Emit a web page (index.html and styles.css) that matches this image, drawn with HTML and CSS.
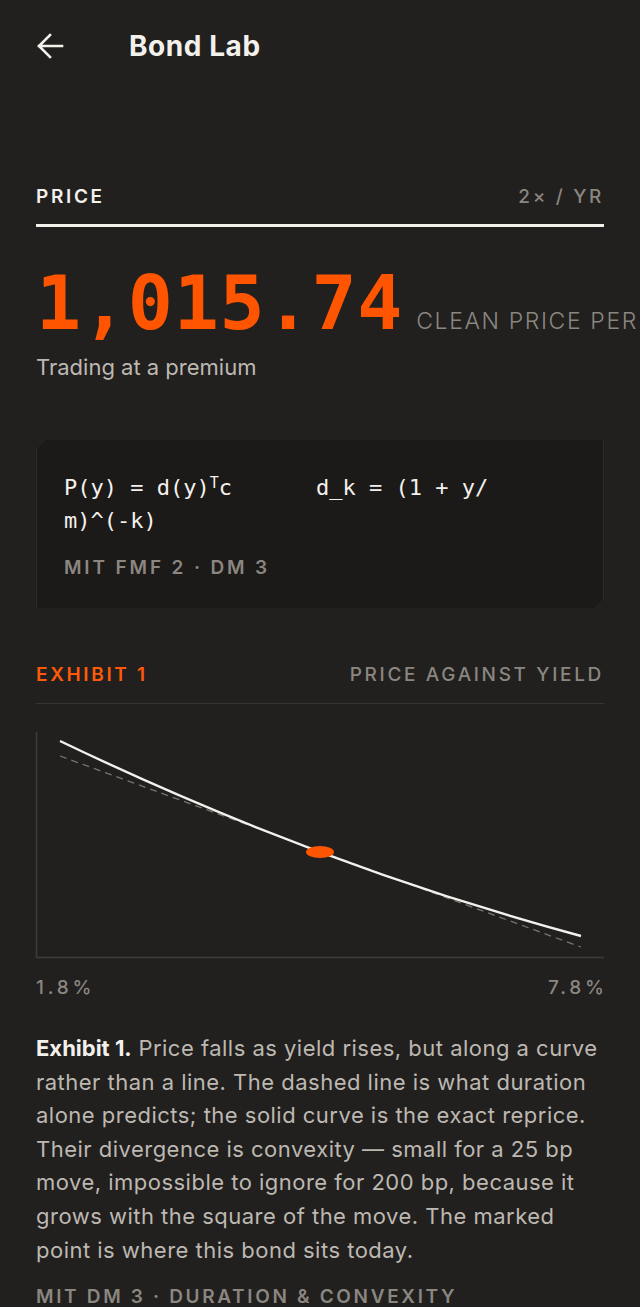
FILE: index.html
```html
<!DOCTYPE html>
<html lang="en">
<head>
<meta charset="utf-8">
<title>Bond Lab</title>
<link rel="stylesheet" href="styles.css">
</head>
<body>
<div class="page">
  <header class="topbar">
    <svg class="back" viewBox="0 0 28 28" width="28" height="28" aria-hidden="true">
      <path d="M26 14H3M14 3L3 14l11 11" fill="none" stroke="#f4f1ec" stroke-width="2.6" stroke-linecap="square"/>
    </svg>
    <h1 class="title">Bond Lab</h1>
  </header>

  <section class="price">
    <div class="sec-head strong">
      <span class="lbl white">PRICE</span>
      <span class="lbl gray">2× / YR</span>
    </div>
    <div class="price-row">
      <span class="big">1,015.74</span>
      <span class="unit">CLEAN PRICE PER 100 FACE</span>
    </div>
    <p class="status">Trading at a premium</p>
  </section>

  <div class="card">
    <div class="card-inner">
      <p class="formula"><span class="eq first">P(y) = d(y)<sup>T</sup>c</span><span class="eq">d_k = (1 + y/<wbr>m)^(-k)</span></p>
      <p class="lbl gray src">MIT FMF 2 · DM 3</p>
    </div>
  </div>

  <section class="exhibit">
    <div class="sec-head thin">
      <span class="lbl orange">EXHIBIT 1</span>
      <span class="lbl gray">PRICE AGAINST YIELD</span>
    </div>
    <svg class="chart" viewBox="0 0 568 226" width="568" height="226" aria-hidden="true">
      <path d="M0.5 0V225.5H568" fill="none" stroke="#3f3d3a" stroke-width="1.5"/>
      <path d="M24 24L545 215" fill="none" stroke="#77736e" stroke-width="1.3" stroke-dasharray="7 5"/>
      <path d="M24 9Q283.5 133.5 545 204" fill="none" stroke="#f4f1ec" stroke-width="2.4"/>
      <ellipse cx="284" cy="120" rx="14" ry="6" fill="#ff5500"/>
    </svg>
    <div class="axis">
      <span class="lbl gray">1.8%</span>
      <span class="lbl gray">7.8%</span>
    </div>
    <p class="caption"><strong>Exhibit 1.</strong> Price falls as yield rises, but along a curve rather than a line. The dashed line is what duration alone predicts; the solid curve is the exact reprice. Their divergence is convexity — small for a 25 bp move, impossible to ignore for 200 bp, because it grows with the square of the move. The marked point is where this bond sits today.</p>
    <p class="lbl gray src2">MIT DM 3 · DURATION &amp; CONVEXITY</p>
  </section>
</div>
</body>
</html>
```
FILE: styles.css
```css
html, body {
  margin: 0;
  padding: 0;
  background: #21201f;
}
body {
  font-family: Inter, "Noto Sans", sans-serif;
  color: #f4f1ec;
  overflow: hidden;
}
.page {
  padding: 0 36px;
  height: 1307px;
  overflow: hidden;
}
.topbar {
  height: 92px;
  display: flex;
  align-items: center;
  gap: 65px;
}
.back {
  display: block;
  flex: none;
}
.title {
  margin: 0;
  font-size: 28px;
  font-weight: 700;
  letter-spacing: 0.02em;
  color: #f4f1ec;
}
.lbl {
  font-size: 19px;
  line-height: 24px;
  letter-spacing: 0.14em;
  font-weight: 600;
}
.white { color: #f4f1ec; }
.gray { color: #8b8680; }
.orange { color: #ff5a0a; }
.sec-head {
  display: flex;
  justify-content: space-between;
  align-items: center;
}
.sec-head.strong {
  margin-top: 93px;
  padding-bottom: 15px;
  border-bottom: 3px solid #f4f1ec;
}
.sec-head .lbl.gray {
  font-weight: 500;
}
.price-row {
  margin-top: 39px;
  display: flex;
  align-items: baseline;
  white-space: nowrap;
  margin-right: -36px;
  overflow: hidden;
}
.big {
  font-family: "DejaVu Sans Mono", "Liberation Mono", monospace;
  font-weight: 700;
  font-size: 75px;
  line-height: 1;
  color: #ff5500;
  letter-spacing: 0.01em;
}
.unit {
  margin-left: 13px;
  font-size: 23px;
  letter-spacing: 0.07em;
  color: #8b8680;
  font-weight: 300;
}
.status {
  margin: 12px 0 0;
  font-size: 22px;
  line-height: 29px;
  color: #bdb8b1;
}
.card {
  margin-top: 58px;
  background: #2c2b29;
  clip-path: polygon(9px 0, 100% 0, 100% calc(100% - 9px), calc(100% - 9px) 100%, 0 100%, 0 9px);
}
.card-inner {
  margin: 1px;
  background: #1b1a19;
  padding: 31px 64px 28px 27px;
  clip-path: polygon(8px 0, 100% 0, 100% calc(100% - 8px), calc(100% - 8px) 100%, 0 100%, 0 8px);
}
.formula {
  margin: 0;
  font-family: "DejaVu Sans Mono", "Liberation Mono", monospace;
  font-size: 22px;
  line-height: 33px;
  color: #f4f1ec;
}
.formula sup {
  font-size: 15px;
  line-height: 0;
  vertical-align: 7px;
}
.eq.first {
  margin-right: 84px;
}
.src {
  margin: 19px 0 0;
  letter-spacing: 0.15em;
}
.exhibit {
  margin-top: 55px;
}
.sec-head.thin {
  padding-bottom: 16px;
  border-bottom: 1px solid #363533;
}
.chart {
  display: block;
  margin-top: 28px;
  overflow: visible;
}
.axis {
  margin-top: 18px;
  display: flex;
  justify-content: space-between;
}
.axis .lbl {
  font-weight: 500;
  letter-spacing: 0.2em;
}
.axis .lbl:last-child {
  margin-right: -0.2em;
}
.caption {
  margin: 32px 0 0;
  font-size: 22px;
  line-height: 33.6px;
  letter-spacing: 0.022em;
  color: #bdb8b1;
}
.caption strong {
  color: #f4f1ec;
  font-weight: 700;
  letter-spacing: 0;
}
.src2 {
  margin: 18px 0 0;
}
```
